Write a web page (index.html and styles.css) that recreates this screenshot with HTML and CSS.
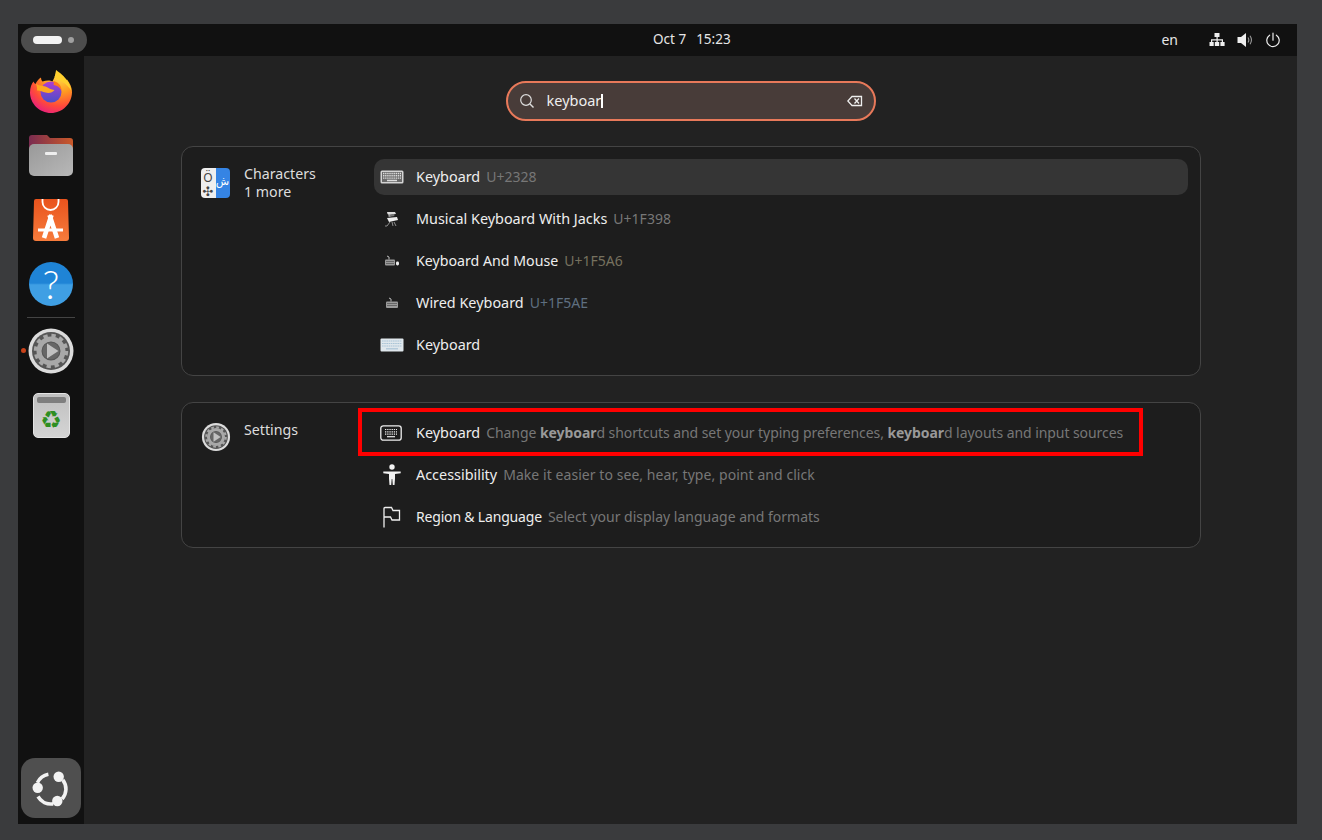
FILE: index.html
```html
<!DOCTYPE html>
<html lang="en">
<head>
<meta charset="utf-8">
<title>Activities search</title>
<link rel="stylesheet" href="styles.css">
</head>
<body>
<div class="screen">
  <header class="topbar">
    <div class="pill"><span class="pill-bar"></span><span class="pill-dot"></span></div>
    <div class="clock"><span>Oct 7</span><span>15:23</span></div>
    <div class="status">
      <span class="lang">en</span>
      <svg class="st" viewBox="0 0 16 16"><path fill="#eee" d="M5.500 1h5v4H8.700v2.200H14V10h1.600v4h-4.200v-4h1.400V8.400H8.700V10h1.500v4H5.800v-4h1.700V8.400H3.200V10h1.500v4H.5v-4H2V7.200h5.500V5h-2z"/></svg>
      <svg class="st" viewBox="0 0 16 16"><path fill="#eee" d="M.5 5h3.500L9 1v14l-5-4H.5z"/><path fill="none" stroke="#999" stroke-width="1.100" d="M11 5.500c1 1.500 1 3.500 0 5M13 3.800c1.800 2.600 1.800 5.800 0 8.400"/></svg>
      <svg class="st" viewBox="0 0 16 16"><path fill="none" stroke="#eee" stroke-width="1.200" stroke-linecap="round" d="M8 1.200v7M4.600 3.200a6.200 6.200 0 1 0 6.800 0"/></svg>
    </div>
  </header>
  <div class="body">
    <nav class="dock">
      <div class="slot">
        <svg width="48" height="48" viewBox="0 0 48 48">
          <defs>
            <radialGradient id="fx" cx="0.72" cy="0.12" r="1"><stop offset="0" stop-color="#ffe04a"/><stop offset="0.4" stop-color="#ff9a20"/><stop offset="0.72" stop-color="#ff4a3a"/><stop offset="1" stop-color="#e5188a"/></radialGradient>
            <linearGradient id="fp" x1="0" y1="0" x2="0" y2="1"><stop offset="0" stop-color="#b03cd0"/><stop offset="1" stop-color="#4a4fc8"/></linearGradient>
          </defs>
          <path fill="url(#fx)" d="M29 2c1 3-.5 5 1 7 1.500 1.500 5 .5 6-1 .8 1.500 1 3 1.500 4 1 .3 2 0 2.500-.5 3 4 5 8 5 12.500C45 35.500 35.500 45 24 45S3 35.500 3 24.500c0-5 1.500-8.500 3.500-11 .5 1 1 2 2 2.500 1-2.500 3-5 5.500-6.500 0 1.500.5 3 1.500 4 3.500-1.500 8-1.500 10 0 1.500-3 3.500-7 3.500-11z"/>
          <path fill="#ffd02e" d="M29 2c6 4 14 11 15.500 21-2-3-5-7-9-9-3-2-6-3-8-5 1-3 1.500-5 1.500-7z"/>
          <circle cx="24" cy="24" r="10.500" fill="url(#fp)"/>
          <path fill="#ffa91f" d="M9 15.500c3 2.500 6 2 9.500 3 3 1 5.500 3.500 9 3.500-2 3-6 3.500-9 2.500-3.500-1-6-2.500-8.500-2 .5-2.500-.5-5-1-7z"/>
          <path fill="#ff7a1e" d="M26 13c4 .5 9 4 8.500 10-1-3-4-5.500-8-6 .5-1.500.5-3-.5-4z"/>
        </svg>
      </div>
      <div class="slot">
        <svg width="48" height="48" viewBox="0 0 48 48">
          <defs>
            <linearGradient id="ft" x1="0" y1="0" x2="1" y2="0"><stop offset="0" stop-color="#7a2c50"/><stop offset="1" stop-color="#cb5a2a"/></linearGradient>
            <linearGradient id="fb" x1="0" y1="0" x2="1" y2="1"><stop offset="0" stop-color="#999"/><stop offset="1" stop-color="#b8b8b8"/></linearGradient>
          </defs>
          <path fill="url(#ft)" d="M2 6a3 3 0 0 1 3-3h15l3 3h20a3 3 0 0 1 3 3v15H2z"/>
          <rect x="2" y="12" width="44" height="32" rx="5" fill="url(#fb)"/>
          <rect x="18" y="20" width="12" height="3" rx="1" fill="#eee"/>
        </svg>
      </div>
      <div class="slot">
        <svg width="48" height="48" viewBox="0 0 48 48">
          <defs><linearGradient id="sb" x1="0" y1="0" x2="0" y2="1"><stop offset="0" stop-color="#e9531d"/><stop offset="1" stop-color="#f77c3c"/></linearGradient></defs>
          <path fill="url(#sb)" d="M9 3h30a2 2 0 0 1 2 2l1 37a3 3 0 0 1-3 3H9a3 3 0 0 1-3-3L7 5a2 2 0 0 1 2-2z"/>
          <path fill="none" stroke="#fff" stroke-width="1.800" d="M15.500 3v3a8 8 0 0 0 16 0V3"/>
          <path fill="none" stroke="#fff" stroke-width="4.600" d="M24.500 19 17 42M22.500 19 30 42"/>
          <path fill="none" stroke="#fff" stroke-width="3" d="M11 34h25"/>
        </svg>
      </div>
      <div class="slot">
        <div class="help"><span>?</span></div>
      </div>
      <div class="sep"></div>
      <div class="slot slot-active">
        <span class="run-dot"></span>
        <svg width="48" height="48" viewBox="0 0 48 48">
          <circle cx="24" cy="24" r="22.500" fill="#dcdcdc"/>
          <circle cx="24" cy="24" r="19" fill="#565656"/>
          <circle cx="24" cy="24" r="12" fill="none" stroke="#a8a8a8" stroke-width="5"/>
          <circle cx="24" cy="24" r="15.500" fill="none" stroke="#a8a8a8" stroke-width="3.500" stroke-dasharray="4.300 3.810"/>
          <circle cx="24" cy="24" r="8.500" fill="#666"/>
          <path fill="#c0c0c0" d="M20 16.500l11.500 7.500L20 31.500z"/>
        </svg>
      </div>
      <div class="slot">
        <div class="trash"><span class="trash-lid"></span><span class="trash-mark">♻</span></div>
      </div>
      <div class="apps">
        <svg width="38" height="38" viewBox="0 0 38 38">
          <g fill="none" stroke="#f2f2f2" stroke-width="3.600">
            <path d="M5.400 13.700A15 15 0 0 1 16.400 5.200"/><path d="M30.800 10.800A15 15 0 0 1 30.100 30"/><path d="M21.100 34.900A15 15 0 0 1 6 27.500"/>
          </g>
          <circle cx="26.700" cy="7.700" r="5.200" fill="#f2f2f2"/><circle cx="5.700" cy="18.700" r="5.200" fill="#f2f2f2"/><circle cx="25.300" cy="32" r="5.200" fill="#f2f2f2"/>
        </svg>
      </div>
    </nav>
    <main class="main">
      <div class="search">
        <svg class="search-ico" viewBox="0 0 16 16"><circle cx="7" cy="7" r="5.300" fill="none" stroke="#ddd" stroke-width="1.200"/><path stroke="#ddd" stroke-width="1.400" d="M11 11l3.500 3.500"/></svg>
        <span class="search-text">keyboar</span><span class="caret"></span>
        <svg class="search-clear" viewBox="0 0 16 12"><path fill="none" stroke="#eee" stroke-width="1.300" d="M5 1.500h9.500v9H5L.8 6z"/><path stroke="#eee" stroke-width="1.300" d="M7.500 3.500l4.500 5M12 3.500l-4.500 5"/></svg>
      </div>

      <section class="card">
        <div class="provider">
          <div class="chars">
            <span class="chars-l"><span>Ö</span><span class="chars-cross">✣</span></span>
            <span class="chars-r">ش</span>
          </div>
          <div class="prov-text"><div>Characters</div><div>1 more</div></div>
        </div>
        <div class="rows">
          <div class="row row-hl">
            <span class="ico">
              <svg width="24" height="14" viewBox="0 0 24 14"><rect x=".5" y=".5" width="23" height="13" rx="1.500" fill="#d4d4d4"/><rect x="2" y="2" width="20" height="10" fill="#6a6a6a"/><path stroke="#ddd" stroke-width="1.400" stroke-dasharray="1.400 .7" d="M3 3.500h18M3 5.800h18M3 8.100h18"/><path stroke="#ddd" stroke-width="1.500" d="M7 10.500h10"/></svg>
            </span>
            <span class="name">Keyboard</span><span class="desc">U+2328</span>
          </div>
          <div class="row">
            <span class="ico">
              <svg width="16" height="16" viewBox="0 0 16 16"><path fill="#ddd" d="M3 1h8l1 2-7 1-1.500-1z"/><path fill="#777" d="M4 4l6-1 .5 2-6 1z"/><path fill="#eee" d="M3 7l10-1 1 3-9 2z"/><path stroke="#aaa" stroke-width=".8" fill="none" d="M6 11l-3 4M1 15h2M10 11l2 4M8 11l1 4M5 3l1 3"/></svg>
            </span>
            <span class="name">Musical Keyboard With Jacks</span><span class="desc">U+1F398</span>
          </div>
          <div class="row">
            <span class="ico">
              <svg width="16" height="12" viewBox="0 0 16 12"><rect x="1" y="4.500" width="10" height="6" rx="1" fill="#9a9a9a"/><path stroke="#666" d="M2 6.500h8M2 8.500h8"/><path stroke="#bbb" fill="none" d="M5 4.500V2L3 1"/><rect x="12" y="6.500" width="3" height="4" rx="1.400" fill="#eee"/></svg>
            </span>
            <span class="name name-mid">Keyboard And Mouse</span><span class="desc desc-warm">U+1F5A6</span>
          </div>
          <div class="row">
            <span class="ico">
              <svg width="14" height="12" viewBox="0 0 14 12"><rect x="1" y="4.500" width="12" height="6.500" rx="1" fill="#9a9a9a"/><path stroke="#666" d="M2 6.500h10M2 8.500h10"/><path stroke="#bbb" fill="none" d="M6 4.500V2L4 1"/></svg>
            </span>
            <span class="name">Wired Keyboard</span><span class="desc desc-cool">U+1F5AE</span>
          </div>
          <div class="row">
            <span class="ico">
              <svg width="24" height="14" viewBox="0 0 24 14"><rect x=".5" y=".5" width="23" height="13" rx="1" fill="#dfe7ec"/><path stroke="#a9c4d6" stroke-width="1.200" stroke-dasharray="1.600 .6" d="M2 3h20M2 5.500h20M2 8h20"/><path stroke="#a9c4d6" stroke-width="1.200" d="M6 10.800h12"/></svg>
            </span>
            <span class="name">Keyboard</span>
          </div>
        </div>
      </section>

      <section class="card card-settings">
        <div class="provider">
          <svg class="prov-ico" width="30" height="30" viewBox="0 0 48 48">
            <circle cx="24" cy="24" r="22.500" fill="#dcdcdc"/>
            <circle cx="24" cy="24" r="19" fill="#565656"/>
            <circle cx="24" cy="24" r="12" fill="none" stroke="#a8a8a8" stroke-width="5"/>
            <circle cx="24" cy="24" r="15.500" fill="none" stroke="#a8a8a8" stroke-width="3.500" stroke-dasharray="4.300 3.810"/>
            <circle cx="24" cy="24" r="8.500" fill="#666"/>
            <path fill="#c0c0c0" d="M20 16.500l11.500 7.500L20 31.500z"/>
          </svg>
          <div class="prov-text"><div>Settings</div></div>
        </div>
        <div class="rows">
          <div class="row">
            <span class="ico">
              <svg class="kb-line" width="22" height="16" viewBox="0 0 22 16"><rect x=".8" y=".8" width="20.400" height="14.400" rx="2.500" fill="none" stroke="#eee" stroke-width="1.300"/><path stroke="#eee" stroke-width="1.200" stroke-dasharray="1.300 .9" d="M5 4.500h12M5 6.800h12M5 9.100h12"/><path stroke="#eee" stroke-width="1.200" d="M7 11.700h8"/></svg>
            </span>
            <span class="name">Keyboard</span><span class="desc desc-long">Change <b>keyboar</b>d shortcuts and set your typing preferences, <b>keyboar</b>d layouts and input sources</span>
          </div>
          <div class="row">
            <span class="ico">
              <svg width="18" height="22" viewBox="0 0 18 22"><circle cx="9" cy="3" r="2.700" fill="#f2f2f2"/><path fill="#f2f2f2" d="M.3 7.500h17.400v1.800L12 10v4.500L11.500 21H9.800L9.300 15h-.6l-.5 6H6.500L6 14.500V10L.3 9.300z"/></svg>
            </span>
            <span class="name">Accessibility</span><span class="desc desc-wide">Make it easier to see, hear, type, point and click</span>
          </div>
          <div class="row">
            <span class="ico">
              <svg width="18" height="22" viewBox="0 0 18 22"><path fill="none" stroke="#eee" stroke-width="1.300" d="M1 21.500V2.500a1 1 0 0 1 1-1h6.500l1.500 3h6.500v9.500H9L7.500 11H1"/></svg>
            </span>
            <span class="name name-tight">Region &amp; Language</span><span class="desc">Select your display language and formats</span>
          </div>
        </div>
        <div class="callout"></div>
      </section>
    </main>
  </div>
</div>
</body>
</html>
```
FILE: styles.css
```css
* { box-sizing: border-box; }
html, body { height: 100%; }
body {
  margin: 0;
  background: #3a3b3d;
  padding: 24px 25px 16px 18px;
  font-family: "Noto Sans", "Open Sans", sans-serif;
  font-size: 14px;
  color: #eee;
  overflow: hidden;
}
.screen {
  height: 800px;
  display: flex;
  flex-direction: column;
  background: #222;
}
.topbar {
  height: 32px;
  flex: none;
  background: #111;
  display: flex;
  align-items: center;
  padding-left: 3px;
}
.pill {
  width: 66px;
  height: 26px;
  border-radius: 13px;
  background: #4d4d4d;
  display: flex;
  align-items: center;
  padding-left: 12px;
  gap: 6px;
}
.pill-bar { width: 29px; height: 8px; border-radius: 4px; background: #f2f2f2; }
.pill-dot { width: 6px; height: 6px; border-radius: 50%; background: #a0a0a0; }
.clock {
  margin-left: 566px;
  width: 78px;
  display: flex;
  gap: 10px;
  white-space: nowrap;
  font-size: 13.5px;
  color: #e6e6e6;
  padding-bottom: 2px;
}
.status {
  margin-left: auto;
  display: flex;
  align-items: center;
  padding-right: 16px;
}
.lang { font-size: 14px; margin-right: 31px; color: #e6e6e6; padding-bottom: 2px; }
.st { width: 16px; height: 16px; margin-left: 12px; margin-bottom: 1px; }
.lang + .st { margin-left: 0; }
.body { flex: 1; display: flex; min-height: 0; }
.dock {
  width: 66px;
  flex: none;
  background: #111;
  display: flex;
  flex-direction: column;
  align-items: center;
  padding: 4px 0 6px;
}
.slot {
  width: 66px;
  height: 64px;
  flex: none;
  display: flex;
  align-items: center;
  justify-content: center;
}
.slot-active { position: relative; }
.run-dot {
  position: absolute;
  left: 3px;
  top: 29px;
  width: 5px;
  height: 5px;
  border-radius: 50%;
  background: #c8421a;
}
.sep { width: 48px; height: 1px; background: #444; margin: 1px 0; flex: none; }
.help {
  width: 44px;
  height: 44px;
  border-radius: 50%;
  background: linear-gradient(#1f84d6 0 48%, #3f9fe4 52% 100%);
  display: flex;
  align-items: center;
  justify-content: center;
  color: #fff;
  font-family: "Lato", sans-serif;
  font-weight: 300;
  font-size: 39px;
  line-height: 1;
}
.trash {
  width: 37px;
  height: 45px;
  border-radius: 5px;
  background: linear-gradient(#c0c0c0, #d4d4d4);
  border: 1px solid #e4e4e4;
  padding: 3px;
  display: flex;
  flex-direction: column;
  align-items: center;
}
.trash-lid { width: 100%; height: 6px; border-radius: 2px; background: #7f7f7f; flex: none; }
.trash-mark {
  margin-top: 4px;
  font-family: "DejaVu Sans", sans-serif;
  font-size: 24px;
  line-height: 26px;
  color: #2e8f22;
}
.apps {
  margin-top: auto;
  width: 60px;
  height: 60px;
  border-radius: 14px;
  background: #4f4f4f;
  display: flex;
  align-items: center;
  justify-content: center;
}
.main {
  flex: 1;
  display: flex;
  flex-direction: column;
  align-items: center;
  padding-top: 25px;
}
.search {
  width: 370px;
  height: 40px;
  border-radius: 20px;
  border: 2px solid #e8795a;
  background: #483c39;
  display: flex;
  align-items: center;
  padding: 0 11px;
  font-size: 14.5px;
  color: #eee;
  margin-bottom: 25px;
}
.search-ico { width: 16px; height: 16px; margin-right: 12px; flex: none; }
.search-text { padding-bottom: 2px; }
.caret { width: 2px; height: 14px; background: #fff; flex: none; }
.search-clear { width: 16px; height: 12px; margin-left: auto; flex: none; }
.card {
  width: 1020px;
  border: 1px solid #444;
  border-radius: 12px;
  background: #1d1d1d;
  padding: 12px;
  display: flex;
  margin-bottom: 26px;
  position: relative;
}
.provider {
  width: 180px;
  flex: none;
  display: flex;
  gap: 14.5px;
  padding: 9px 0 0 7px;
  line-height: 18px;
  font-size: 14.2px;
}
.prov-ico { flex: none; margin-top: -2px; margin-right: -1px; }
.prov-text { margin-top: -3px; color: #ddd; white-space: nowrap; }
.chars {
  width: 29px;
  height: 30px;
  border-radius: 4px;
  overflow: hidden;
  display: flex;
  flex: none;
  font-size: 12px;
  line-height: 16px;
  text-align: center;
}
.chars-l {
  width: 15px;
  background: #eee;
  color: #444;
  display: flex;
  flex-direction: column;
  align-items: center;
  padding-top: 2px;
}
.chars-cross { font-family: "DejaVu Sans", sans-serif; font-size: 13px; line-height: 12px; }
.chars-r {
  width: 14px;
  background: #3584e4;
  color: #fff;
  font-family: "DejaVu Sans", sans-serif;
  font-size: 11px;
  line-height: 28px;
}
.rows { flex: 1; display: flex; flex-direction: column; gap: 6px; }
.row {
  height: 36px;
  display: flex;
  align-items: center;
  padding-left: 6px;
  padding-bottom: 2px;
  border-radius: 10px;
  white-space: nowrap;
}
.row-hl { background: #353535; }
.ico {
  width: 24px;
  height: 24px;
  flex: none;
  margin-right: 12.5px;
  margin-bottom: -2px;
  display: flex;
  align-items: center;
  justify-content: center;
}
.kb-line { margin-right: 2px; }
.name { color: #eee; font-size: 14.4px; }
.name-mid { font-size: 14.2px; }
.name-tight { font-size: 14px; letter-spacing: -.18px; }
.desc { margin-left: 6px; color: #777; }
.desc-long { letter-spacing: -.07px; }
.desc-wide { letter-spacing: .06px; }
.desc b { color: #999; font-weight: 700; }
.desc-warm { color: #76715f; }
.desc-cool { color: #5f6f80; }
.callout {
  position: absolute;
  left: 176px;
  top: 5px;
  width: 785px;
  height: 48px;
  border: 4px solid #f00;
}
```
